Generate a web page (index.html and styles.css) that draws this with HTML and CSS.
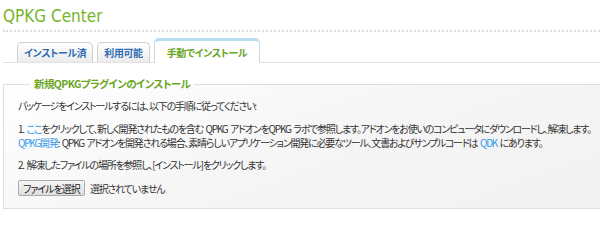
FILE: index.html
```html
<!DOCTYPE html>
<html lang="ja">
<head>
  <meta charset="utf-8">
  <title>QPKG Center</title>
  <link rel="stylesheet" href="styles.css">
</head>
<body>
  <h1 class="title">QPKG Center</h1>

  <ul class="tabs">
    <li class="tab">インストール済</li>
    <li class="tab">利用可能</li>
    <li class="tab active">手動でインストール</li>
  </ul>

  <!-- 手動インストール -->
  <fieldset class="panel">
    <legend>新規QPKGプラグインのインストール</legend>
    <p class="intro">パッケージをインストールするには、以下の手順に従ってください:</p>
    <p class="step">1. <a href="#">ここ</a>をクリックして、新しく開発されたものを含む QPKG アドオンをQPKG ラボで参照します。アドオンをお使いのコンピュータにダウンロードし、解凍します。<br>
      <a href="#">QPKG開発</a>: QPKG アドオンを開発される場合、素晴らしいアプリケーション開発に必要なツール、文書およびサンプルコードは <a href="#">QDK</a> にあります。</p>
    <p class="step">2. 解凍したファイルの場所を参照し、[インストール]をクリックします。</p>
    <div class="file-row">
      <button class="file-btn">ファイルを選択</button>
      <span class="file-none">選択されていません</span>
    </div>
  </fieldset>
</body>
</html>
```

FILE: styles.css
```css
body {
  margin: 0; padding: 0;
  overflow: hidden;
  font-family: "Noto Sans CJK JP", sans-serif;
  font-size: 10px; color: #333;
  background: #fff;
}
.title {
  margin: 0 0 0 3px; padding: 6px 0 4px;
  font-family: "DejaVu Sans Condensed", "DejaVu Sans", sans-serif;
  font-size: 17px; font-weight: normal;
  color: #74b42a;
  border-bottom: 2px dotted #ddd;
  line-height: 20px;
}
.tabs {
  display: flex; align-items: flex-end; gap: 4px;
  list-style: none;
  margin: 6px 0 0 3px; padding: 0 0 0 14px;
  border-bottom: 1px solid #e2e2e2;
  height: 24px;
}
.tab {
  height: 19px; line-height: 20px;
  padding: 0 6px;
  border: 1px solid #cfcfcf; border-bottom: none;
  border-radius: 5px 5px 0 0;
  background: linear-gradient(#fff, #ececec);
  color: #2e6db3; font-weight: bold;
  letter-spacing: -0.4px;
  font-feature-settings: "palt";
}
.tab.active {
  height: 22px; line-height: 24px;
  padding: 0 12px;
  margin-bottom: -1px;
  border-color: #ccd8e0;
  border-top: 3px solid #b9dcf5;
  background: #fff;
  color: #6aa51e;
}

/* Панель */
.panel {
  margin: 14px -20px 0 3px; padding: 8px 14px 12px;
  border: 1px solid #dedede;
  background: linear-gradient(160deg, #fff 0%, #f6f6f6 45%, #f2f2f2 100%);
  letter-spacing: -1.2px; word-spacing: 1.5px;
  font-feature-settings: "palt";
}
.panel legend {
  padding: 0 4px; margin-left: 12px;
  line-height: 14px;
  color: #6aa51e; font-weight: bold; font-size: 10.5px;
  letter-spacing: -0.6px;
}
.panel p { margin: 0 0 8px; line-height: 14px; }
.panel .intro { margin-bottom: 9px; }
.panel a { color: #3399ee; text-decoration: none; }
.file-row { display: flex; align-items: center; gap: 5px; margin-top: 5px; }
.file-btn {
  font-family: inherit; font-size: 10px; color: #222;
  height: 16px; padding: 0 4px;
  border: 1px solid #aaa; border-radius: 2px;
  background: linear-gradient(#f6f6f6, #dedede);
  letter-spacing: -1px;
  font-feature-settings: "palt";
}
```
